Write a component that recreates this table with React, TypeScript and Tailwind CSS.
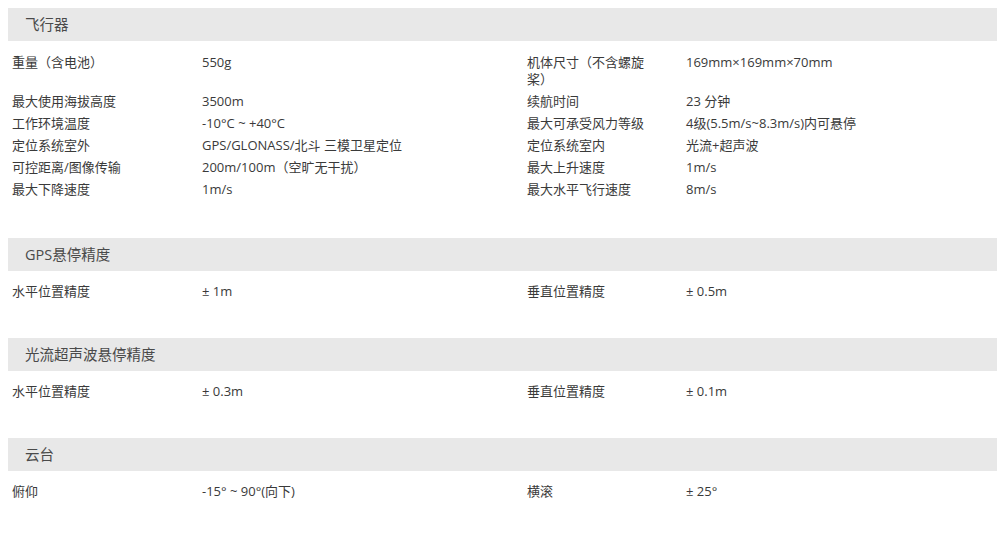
type Spec = [string, string];

type Row = { left: Spec; right?: Spec };

type Section = { title: string; rows: Row[] };

const sections: Section[] = [
    {
        title: "飞行器",
        rows: [
            {
                left: ["重量（含电池）", "550g"],
                right: ["机体尺寸（不含螺旋桨）", "169mm×169mm×70mm"],
            },
            {
                left: ["最大使用海拔高度", "3500m"],
                right: ["续航时间", "23 分钟"],
            },
            {
                left: ["工作环境温度", "-10°C ~ +40°C"],
                right: ["最大可承受风力等级", "4级(5.5m/s~8.3m/s)内可悬停"],
            },
            {
                left: ["定位系统室外", "GPS/GLONASS/北斗 三模卫星定位"],
                right: ["定位系统室内", "光流+超声波"],
            },
            {
                left: ["可控距离/图像传输", "200m/100m（空旷无干扰）"],
                right: ["最大上升速度", "1m/s"],
            },
            {
                left: ["最大下降速度", "1m/s"],
                right: ["最大水平飞行速度", "8m/s"],
            },
        ],
    },
    {
        title: "GPS悬停精度",
        rows: [
            {
                left: ["水平位置精度", "± 1m"],
                right: ["垂直位置精度", "± 0.5m"],
            },
        ],
    },
    {
        title: "光流超声波悬停精度",
        rows: [
            {
                left: ["水平位置精度", "± 0.3m"],
                right: ["垂直位置精度", "± 0.1m"],
            },
        ],
    },
    {
        title: "云台",
        rows: [
            {
                left: ["俯仰", "-15° ~ 90°(向下)"],
                right: ["横滚", "± 25°"],
            },
        ],
    },
];

function SpecRow({ row }: { row: Row }) {
    return (
        <div className="flex items-start py-[2.5px] leading-[17px]">
            <div className="w-[194px] shrink-0 pl-1">{row.left[0]}</div>
            <div className="w-[325px] shrink-0">{row.left[1]}</div>
            {row.right && (
                <>
                    <div className="w-[159px] shrink-0 pr-[34px]">
                        {row.right[0]}
                    </div>
                    <div className="flex-1">{row.right[1]}</div>
                </>
            )}
        </div>
    );
}

export default function App() {
    return (
        <div
            className="min-h-[537px] bg-white pt-2 pl-2 text-[13px] text-[#3a3a3a]"
            style={{
                fontFamily: '"Open Sans", "Noto Sans CJK SC", sans-serif',
            }}
        >
            {sections.map((s, i) => (
                <div
                    key={s.title}
                    className={
                        "w-[989px] " + (i === 0 ? "mb-[38px]" : "mb-[36px]")
                    }
                >
                    <div className="flex h-[33px] items-center bg-[#e8e8e8] pl-[17px] text-[14.5px] text-[#4a4a4a]">
                        {s.title}
                    </div>
                    <div className={i === 0 ? "pt-[10px]" : "pt-[9px]"}>
                        {s.rows.map((r) => (
                            <SpecRow key={r.left[0]} row={r} />
                        ))}
                    </div>
                </div>
            ))}
        </div>
    );
}
